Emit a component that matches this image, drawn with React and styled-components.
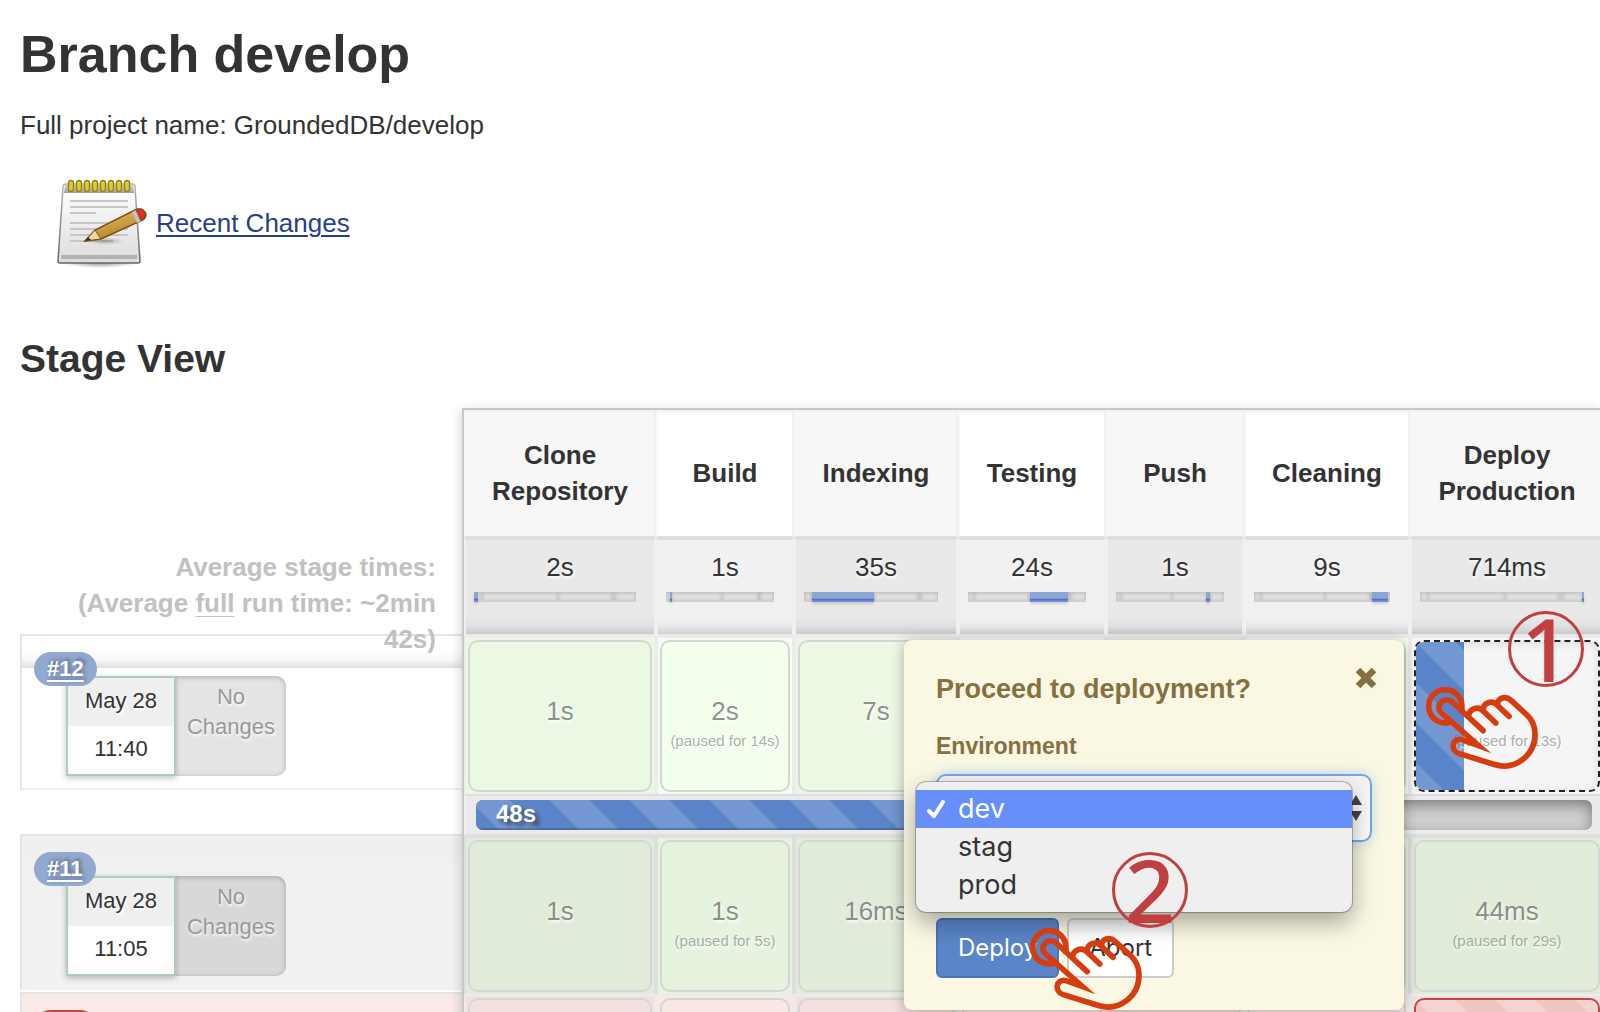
import React from "react";
import styled, { createGlobalStyle, css } from "styled-components";

const GlobalStyle = createGlobalStyle`
  *, *::before, *::after { box-sizing: border-box; }
  body {
    margin: 0;
    background: #fff;
    color: #333;
    font: 26px/36px "Liberation Sans", Arial, sans-serif;
  }
  button, select { font-family: inherit; }
`;

const Page = styled.main`
  height: 100vh;
  overflow: hidden;
  padding: 24px 0 0 20px;
`;

const Title = styled.h1`
  margin: 0 0 23px;
  font-size: 52px;
  line-height: 60px;
`;

const ProjectName = styled.p`
  margin: 0 0 32px;
`;

const ChangesRow = styled.div`
  display: flex;
  align-items: center;
  gap: 7px;
  padding-left: 33px;
  height: 96px;

  a {
    color: #27408b;
    text-underline-offset: 3px;
    text-decoration-thickness: 2px;
  }
`;

const Subtitle = styled.h2`
  margin: 64px 0 25px;
  font-size: 39px;
  line-height: 48px;
`;

const StageView = styled.section`
  display: flex;
  align-items: flex-start;
`;

/* ---------- builds column ---------- */

const Builds = styled.div`
  flex: none;
  width: 442px;
`;

const Averages = styled.div`
  height: 226px;
  padding: 141px 26px 0 20px;
  text-align: right;
  font-weight: bold;
  color: #c1c1c1;

  u {
    text-decoration-thickness: 1px;
    text-underline-offset: 4px;
  }
`;

const rowTones = {
  running: css`
    background: linear-gradient(#fff0 50%, #f6f6f6 78%, #dedede) 0 0 / 100% 32px no-repeat;
    border-bottom: 2px solid #f0f0f0;
    margin-bottom: 44px;
  `,
  done: css`
    background: linear-gradient(#efefef, #f1f1f1 40%);
    margin-bottom: 2px;
  `,
  failed: css`
    background: #faeae7;
  `,
};

const BuildRow = styled.article`
  height: 156px;
  padding: 16px 0 0 12px;
  border: 2px solid #e4e4e4;
  border-width: 2px 0 0 2px;
  ${(p) => rowTones[p.$tone]}
`;

const Badge = styled.a`
  position: relative;
  display: block;
  width: fit-content;
  height: 34px;
  padding: 0 13px;
  border-radius: 17px;
  background: ${(p) => (p.$failed ? "#c14848" : "#92a9d2")};
  color: #fff;
  font-size: 22px;
  line-height: 34px;
  font-weight: bold;
  text-underline-offset: 4px;
  text-decoration-thickness: 2px;
  text-shadow: 2px -2px 4px rgba(0, 0, 0, 0.4);
`;

const BuildCard = styled.div`
  display: flex;
  height: 100px;
  margin: -10px 0 0 32px;
  font-size: 22px;
  text-align: center;
  text-shadow: 1px 2px 3px #fff;
`;

const When = styled.time`
  display: grid;
  grid-template-rows: 1fr 1fr;
  width: 110px;
  border: 2px solid #aecdb9;
  background: #fff;
  box-shadow: 0 2px 6px rgba(0, 0, 0, 0.25);
  line-height: 46px;

  span:first-child {
    background: #efefef;
  }
`;

const NoChanges = styled.div`
  display: flex;
  justify-content: center;
  width: 110px;
  padding: 6px 14px;
  border-radius: 0 10px 10px 0;
  background: ${(p) => (p.$dark ? "#d8d8d8" : "#e4e4e4")};
  box-shadow: inset 0 1px 5px rgba(0, 0, 0, 0.25);
  color: #999;
  line-height: 30px;
`;

/* ---------- stage table ---------- */

const Panel = styled.div`
  position: relative;
  flex: 1;
  min-width: 0;
  border: 2px solid #c8c8c8;
  border-width: 2px 0 0 2px;
  box-shadow: -2px 2px 10px rgba(0, 0, 0, 0.15);
  background: #f0f0f0;
`;

const Clip = styled.div`
  overflow: hidden;
`;

const Table = styled.table`
  width: calc(100% + 4px);
  table-layout: fixed;
  border-collapse: separate;
  border-spacing: 0;
  text-align: center;
`;

const HeadCell = styled.th`
  height: 128px;
  padding: 0 20px 2px;
  border: 2px solid #f1f1f1;
  border-left-color: #f7f7f7;
  border-bottom-color: #dfdfdf;
  background: #fff;

  &:nth-child(odd) { background: #f7f7f7; }
`;

const TotalCell = styled.td`
  height: 98px;
  padding: 9px 18px 0 8px;
  vertical-align: top;
  border: 2px solid #f0f0f0;
  border-top-color: #dfdfdf;
  border-bottom-color: #eaeaea;
  background: linear-gradient(transparent 78px, rgba(0, 0, 0, 0.04) 86px, rgba(0, 0, 0, 0.13) 94px) padding-box #f1f1f1;
  text-shadow: 1px 2px 3px #fff;

  &:nth-child(odd) { background-color: #e9e9e9; }
`;

const TotalTime = styled.div`
  margin-right: -10px;
`;

const Track = styled.div`
  position: relative;
  display: grid;
  grid-template-columns: 5% 47% 33% 2% 13%;
  height: 10px;
  margin-top: 7px;
  background: #e2e2e2;
  border-bottom: 2px solid #d0d0d0;

  i { box-shadow: inset 0 1px 4px rgba(0, 0, 0, 0.2); }
`;

const Fill = styled.div`
  position: absolute;
  top: 0;
  height: 10px;
  background: linear-gradient(#8ba6d2 60%, #5670c8 75%, #7f98dc);
  box-shadow: 0 2px 3px rgba(0, 0, 0, 0.15);
`;

const cellTones = {
  ok: ["#ebf8e4", "#f3ffed"],
  okDark: ["#e0ecd9", "#e6f3df"],
  failed: ["#f2e1de", "#fae8e5"],
};

const StageCell = styled.td`
  height: 158px;
  padding: 2px;
  vertical-align: top;
  border: 2px solid ${(p) => (p.$tone === "okDark" ? "#dedede" : "#ececec")};
  border-bottom: 0;
  background: ${(p) => cellTones[p.$tone][1]};

  &:nth-child(odd) { background: ${(p) => cellTones[p.$tone][0]}; }
  ${(p) => p.$paused && "&&& { background: #f7f7f7; }"}
`;

const stripes = (alpha) => css`
  background-image: linear-gradient(
    45deg,
    rgba(255, 255, 255, ${alpha}) 25%,
    transparent 25%,
    transparent 50%,
    rgba(255, 255, 255, ${alpha}) 50%,
    rgba(255, 255, 255, ${alpha}) 75%,
    transparent 75%
  );
  background-size: 80px 80px;
`;

const boxKinds = {
  waiting: css`
    border: 2px dashed #222;
    background: #f5f5f5;
    box-shadow: inset 0 2px 8px rgba(0, 0, 0, 0.1);
  `,
  broken: css`
    border-color: #c14848;
    background-color: #eec5c1;
    ${stripes(0.25)}
  `,
};

const StageBox = styled.div`
  position: relative;
  height: 152px;
  padding-top: 51px;
  border: 2px solid #d5d5d5;
  border-radius: 10px;
  overflow: hidden;
  text-shadow: 1px 2px 3px #fff;
  color: rgba(51, 51, 51, 0.55);
  ${(p) => boxKinds[p.$kind]}

  small {
    display: block;
    position: relative;
    margin: 0 -10px;
    font-size: 15px;
    line-height: 24px;
    white-space: nowrap;
    color: rgba(51, 51, 51, 0.4);
  }
`;

const StageTime = styled.div`
  height: 36px;
`;

const WaitFill = styled.div`
  position: absolute;
  inset: 0 auto 0 0;
  width: 48px;
  background-color: #5a85c8;
  ${stripes(0.15)}
`;

const ProgressCell = styled.td`
  height: 42px;
  padding: 4px 10px;
  border: 2px solid #dedede;
  border-left-color: #f0f0f0;
  background: #ebebeb;
`;

const Progress = styled.div`
  height: 30px;
  border-radius: 7px;
  background: #cfcfcf;
  box-shadow: inset 0 5px 14px rgba(0, 0, 0, 0.4);
  overflow: hidden;
`;

const ProgressFill = styled.div`
  height: 30px;
  padding-left: 20px;
  background-color: #5a85c8;
  ${stripes(0.15)}
  background-position: -6px 0;
  box-shadow: inset 0 -2px 0 rgba(40, 70, 130, 0.4);
  color: #fff;
  font-size: 24px;
  line-height: 28px;
  font-weight: bold;
  text-align: left;
  text-shadow: 4px 4px 4px rgba(0, 0, 0, 0.5);
`;

/* ---------- deployment dialog ---------- */

const Popup = styled.div`
  position: absolute;
  top: 230px;
  right: 196px;
  width: 500px;
  height: 370px;
  padding: 31px 32px;
  border-radius: 8px;
  background: #faf8e3;
  box-shadow: 0 2px 14px rgba(0, 0, 0, 0.3);
  color: #86703f;
`;

const PopupHead = styled.div`
  display: flex;
  justify-content: space-between;
  align-items: flex-start;
  margin-bottom: 21px;
`;

const PopupTitle = styled.h3`
  margin: 0;
  font-size: 27px;
  line-height: 36px;
`;

const Close = styled.button`
  display: flex;
  margin: -5px -6px 0 0;
  padding: 0;
  border: 0;
  background: none;
  color: inherit;
`;

const Field = styled.label`
  display: block;
  margin-bottom: 10px;
  font-size: 23px;
  font-weight: bold;
`;

const SelectWrap = styled.div`
  position: relative;
  margin-bottom: 76px;

  > svg {
    position: absolute;
    right: 9px;
    top: 20px;
    pointer-events: none;
  }
`;

const Select = styled.select`
  display: block;
  width: 100%;
  height: 68px;
  padding: 0 22px;
  appearance: none;
  border: 2px solid #78a5e6;
  border-radius: 10px;
  outline: 0;
  background: linear-gradient(#f2f2f2, #fff);
  box-shadow: 0 0 14px rgba(102, 160, 233, 0.4);
  color: #333;
  font-size: 26px;
`;

const Menu = styled.ul`
  position: absolute;
  top: 8px;
  left: -20px;
  right: 20px;
  margin: 0;
  padding: 8px 0;
  list-style: none;
  border-radius: 10px;
  background: #efefef;
  box-shadow: 0 0 0 1px rgba(0, 0, 0, 0.25), 0 10px 24px rgba(0, 0, 0, 0.35);
  color: #333;
  font: 27px/38px Inter, sans-serif;
`;

const Option = styled.li`
  display: flex;
  align-items: center;
  height: 38px;
  padding-left: 10px;
  ${(p) => p.$active && "background: #678ffb; color: #fff;"}

  span {
    display: flex;
    width: 32px;
  }
`;

const Actions = styled.div`
  display: flex;
  gap: 8px;
`;

const Button = styled.button`
  height: 60px;
  padding: 0 20px;
  border: 2px solid ${(p) => (p.$primary ? "#4a74b8" : "#ccc")};
  border-radius: 6px;
  background: ${(p) => (p.$primary ? "#5a85c8" : "linear-gradient(#eee, #fff 30%)")};
  color: ${(p) => (p.$primary ? "#fff" : "#333")};
  font: 24px/36px Inter, sans-serif;
`;

/* ---------- step markers ---------- */

const Step = styled.span`
  position: absolute;
  top: ${(p) => p.$top}px;
  ${(p) => p.$side};
  width: 76px;
  height: 76px;
  border: 3px solid #c04042;
  border-radius: 50%;
  color: #c04042;
  font: 500 88px/68px "Noto Sans", sans-serif;
  text-align: center;
`;

const HandSvg = styled.svg`
  position: absolute;
  top: ${(p) => p.$top}px;
  ${(p) => p.$side};
`;

function Hand({ top, side }) {
  return (
    <HandSvg $top={top} $side={side} width="112" height="83" viewBox="0 0 337 249" fill="none"
      stroke="#d63c0e" strokeWidth="17" strokeLinecap="round">
      <path strokeLinecap="butt" d="M74 105 A50 50 0 1 1 108 60 V78" />
      <path strokeMiterlimit="10" d="M172 131 L78 44 C58 26 26 52 44 75 L158 176 L108 158 C78 150 72 192 100 200 L206 233 C270 252 328 204 328 142 C328 116 318 96 302 82 L256 40 C238 24 212 34 216 54" />
      <path d="M128 88 C130 64 156 56 172 72 L210 108" />
      <path d="M172 70 C172 46 198 38 214 54 L250 88" />
    </HandSvg>
  );
}

function NotepadIcon() {
  return (
    <svg width="96" height="96" viewBox="0 0 96 96" aria-hidden="true">
      <defs>
        <linearGradient id="paper" x1="0" y1="0" x2="0" y2="1">
          <stop offset="0" stopColor="#fff" />
          <stop offset="1" stopColor="#dcdcdc" />
        </linearGradient>
        <linearGradient id="edge" x1="0" y1="0" x2="0" y2="1">
          <stop offset="0" stopColor="#b4b4b0" />
          <stop offset="1" stopColor="#666" />
        </linearGradient>
        <linearGradient id="band" x1="0" y1="0" x2="0" y2="1">
          <stop offset="0" stopColor="#d2d3cd" />
          <stop offset="1" stopColor="#a0a298" />
        </linearGradient>
        <radialGradient id="shade">
          <stop offset="0" stopColor="#000" stopOpacity=".4" />
          <stop offset="1" stopColor="#000" stopOpacity="0" />
        </radialGradient>
        <linearGradient id="wood" x1="0" y1="0" x2="0.5" y2="1">
          <stop offset="0" stopColor="#eccb7c" />
          <stop offset="1" stopColor="#b07f20" />
        </linearGradient>
      </defs>
      <ellipse cx="47" cy="88" rx="38" ry="5" fill="url(#shade)" />
      <path d="M13 9 H79 Q82 9 82 12 L87 86 Q87 88 85 88 H7 Q5 88 5 86 L10 12 Q10 9 13 9Z"
        fill="url(#paper)" stroke="url(#edge)" strokeWidth="1.5" />
      <path d="M12 10 H80 L81 18 H11Z" fill="url(#band)" />
      <path d="M8 82 H84" stroke="#b2b2b2" strokeWidth="4" />
      <path d="M17 26H75M17 32H75M17 38H43M17 48H75M17 54H75M17 60H75M17 66H60" stroke="#c6c6c6" strokeWidth="2" />
      {[0, 1, 2, 3, 4, 5, 6, 7].map((i) => (
        <rect key={i} x={15.5 + i * 8} y="5.5" width="5" height="11" rx="2.5" fill="#e0cc32" stroke="#91841d" strokeWidth="1.4" />
      ))}
      <ellipse cx="52" cy="66" rx="20" ry="4" fill="url(#shade)" opacity=".6" />
      <path d="M32 66 L42 55 L84 34 Q91 33 93 39 Q93 43 90 45 L48 64Z" fill="url(#wood)" stroke="#785016" strokeWidth="1.4" />
      <path d="M32 66 L42 55 L48 64Z" fill="#ead9a0" stroke="#785016" />
      <path d="M32 66 L35 62 L38 65Z" fill="#333" />
      <path d="M79 37 L83 35 L88 46 L84 48Z" fill="#c5bfc2" />
      <path d="M83 35 Q90 32 92 38 Q93 42 88 46Z" fill="#e32a2a" stroke="#8e3f1c" strokeWidth=".8" />
    </svg>
  );
}

const stages = [
  { name: "Clone Repository", width: 192, avg: "2s", start: 0, span: 2.5 },
  { name: "Build", width: 138, avg: "1s", start: 3.7, span: 1.9 },
  { name: "Indexing", width: 164, avg: "35s", start: 6, span: 46 },
  { name: "Testing", width: 148, avg: "24s", start: 52.5, span: 32 },
  { name: "Push", width: 138, avg: "1s", start: 83.3, span: 3.5 },
  { name: "Cleaning", width: 166, avg: "9s", start: 86.7, span: 11.8 },
  { name: "Deploy Production", width: 194, avg: "714ms", start: 98.7, span: 1.3 },
];

const run12 = [
  { time: "1s" },
  { time: "2s", paused: "(paused for 14s)" },
  { time: "7s" },
  {},
  {},
  {},
  { paused: "(paused for 13s)", kind: "waiting" },
];

const run11 = [
  { time: "1s" },
  { time: "1s", paused: "(paused for 5s)" },
  { time: "16ms" },
  {},
  {},
  {},
  { time: "44ms", paused: "(paused for 29s)" },
];

const run10 = [{}, {}, {}, {}, {}, {}, { kind: "broken" }];

function Run({ cells, tone }) {
  return (
    <tr>
      {cells.map((c, i) => (
        <StageCell key={i} $tone={tone} $paused={c.kind === "waiting"}>
          <StageBox $kind={c.kind}>
            {c.kind === "waiting" && <WaitFill />}
            <StageTime>{c.time}</StageTime>
            {c.paused && <small>{c.paused}</small>}
          </StageBox>
        </StageCell>
      ))}
    </tr>
  );
}

function Build({ number, time, tone }) {
  return (
    <BuildRow $tone={tone}>
      <Badge href={"#build-" + number}>#{number}</Badge>
      <BuildCard>
        <When>
          <span>May 28</span>
          <span>{time}</span>
        </When>
        <NoChanges $dark={tone === "done"}>No Changes</NoChanges>
      </BuildCard>
    </BuildRow>
  );
}

function DeployPopup() {
  return (
    <Popup role="dialog" aria-labelledby="deploy-title">
      <PopupHead>
        <PopupTitle id="deploy-title">Proceed to deployment?</PopupTitle>
        <Close type="button" aria-label="Close">
          <svg width="24" height="24" viewBox="0 0 24 24" stroke="currentColor" strokeWidth="6.5">
            <path d="M4 4 L20 20 M20 4 L4 20" />
          </svg>
        </Close>
      </PopupHead>
      <Field htmlFor="environment">Environment</Field>
      <SelectWrap>
        <Select id="environment" defaultValue="dev">
          <option>dev</option>
          <option>stag</option>
          <option>prod</option>
        </Select>
        <svg width="14" height="28" viewBox="0 0 14 28" fill="#444">
          <path d="M7 1 L13 11 H1Z M7 27 L1 17 H13Z" />
        </svg>
        <Menu role="listbox" aria-label="Environment">
          <Option $active role="option" aria-selected="true">
            <span>
              <svg width="20" height="22" viewBox="0 0 20 22" fill="none" stroke="#fff" strokeWidth="4" strokeLinecap="round" strokeLinejoin="round">
                <path d="M3 13 L8 18 L17 4" />
              </svg>
            </span>
            dev
          </Option>
          <Option role="option" aria-selected="false"><span />stag</Option>
          <Option role="option" aria-selected="false"><span />prod</Option>
        </Menu>
      </SelectWrap>
      <Actions>
        <Button type="button" $primary>Deploy</Button>
        <Button type="button">Abort</Button>
      </Actions>
      <Step $top={212} $side="left: 208px">2</Step>
      <Hand top={288} side="left: 126px" />
    </Popup>
  );
}

export default function App() {
  return (
    <>
      <GlobalStyle />
      <Page>
        <Title>Branch develop</Title>
        <ProjectName>Full project name: GroundedDB/develop</ProjectName>
        <ChangesRow>
          <NotepadIcon />
          <a href="#changes">Recent Changes</a>
        </ChangesRow>
        <Subtitle>Stage View</Subtitle>
        <StageView>
          <Builds>
            <Averages>
              Average stage times:
              <br />
              (Average <u>full</u> run time: ~2min 42s)
            </Averages>
            <Build number="12" time="11:40" tone="running" />
            <Build number="11" time="11:05" tone="done" />
            <BuildRow $tone="failed">
              <Badge $failed href="#build-10">#10</Badge>
            </BuildRow>
          </Builds>
          <Panel>
            <Clip>
              <Table>
                <colgroup>
                  {stages.map((s) => (
                    <col key={s.name} style={{ width: s.width }} />
                  ))}
                </colgroup>
                <thead>
                  <tr>
                    {stages.map((s) => (
                      <HeadCell key={s.name} scope="col">{s.name}</HeadCell>
                    ))}
                  </tr>
                </thead>
                <tbody>
                  <tr>
                    {stages.map((s) => (
                      <TotalCell key={s.name}>
                        <TotalTime>{s.avg}</TotalTime>
                        <Track>
                          <i /><i /><i /><i /><i />
                          <Fill style={{ left: s.start + "%", width: s.span + "%" }} />
                        </Track>
                      </TotalCell>
                    ))}
                  </tr>
                  <Run cells={run12} tone="ok" />
                  <tr>
                    <ProgressCell colSpan={7}>
                      <Progress>
                        <ProgressFill style={{ width: "62%" }}>48s</ProgressFill>
                      </Progress>
                    </ProgressCell>
                  </tr>
                  <Run cells={run11} tone="okDark" />
                  <Run cells={run10} tone="failed" />
                </tbody>
              </Table>
            </Clip>
            <DeployPopup />
            <Step $top={201} $side="right: 16px">1</Step>
            <Hand top={277} side="right: 62px" />
          </Panel>
        </StageView>
      </Page>
    </>
  );
}
